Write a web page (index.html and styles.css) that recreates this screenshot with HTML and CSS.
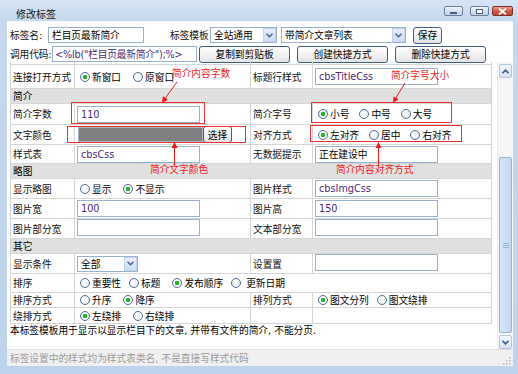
FILE: index.html
```html
<!DOCTYPE html>
<html>
<head>
<meta charset="utf-8">
<title>修改标签</title>
<link rel="stylesheet" href="styles.css">
</head>
<body>
<div class="window">
  <div class="titlebar">
    <span class="title">修改标签</span>
    <div class="controls">
      <span class="ctl min"><i></i></span>
      <span class="ctl max"><i></i></span>
      <span class="ctl close"><svg width="9" height="7" viewBox="0 0 9 7"><path d="M1 0.5 L8 6.5 M8 0.5 L1 6.5" stroke="#fff" stroke-width="1.8"/></svg></span>
    </div>
  </div>
  <div class="client">
    <div class="form">
      <div class="frow">
        <span class="flabel l38">标签名:</span>
        <span class="input w96">栏目页最新简介</span>
        <span class="flabel l40 ml26">标签模板</span>
        <span class="select w67">全站通用<b class="dd"><svg width="7" height="5" viewBox="0 0 7 5"><path d="M0.5 0.8 L3.5 3.8 L6.5 0.8" fill="none" stroke="#4d6185" stroke-width="1.5"/></svg></b></span>
        <span class="select w125 ml4">带简介文章列表<b class="dd"><svg width="7" height="5" viewBox="0 0 7 5"><path d="M0.5 0.8 L3.5 3.8 L6.5 0.8" fill="none" stroke="#4d6185" stroke-width="1.5"/></svg></b></span>
        <span class="btn w29 ml7">保存</span>
      </div>
      <div class="frow">
        <span class="flabel l42">调用代码:</span>
        <span class="input w145 code tight">&lt;%lb("栏目页最新简介");%&gt;</span>
        <span class="btn w91 ml2">复制到剪贴板</span>
        <span class="btn w91 ml7">创建快捷方式</span>
        <span class="btn w91 ml7">删除快捷方式</span>
      </div>
    </div>
    <div class="scrollarea">
      <div class="scrollcontent">
        <table class="grid">
          <colgroup><col class="c1"><col class="c2"><col class="c3"><col class="c4"></colgroup>
          <tr class="h20 cut">
            <td class="lbl"></td>
            <td><span class="radios g12"><span class="radio"><i class="rb on"></i><i class="sp2"></i></span><span class="radio"><i class="rb"></i><i class="sp3"></i></span></span></td>
            <td class="lbl"></td>
            <td><span class="radios g10"><span class="radio"><i class="rb on"></i><i class="sp3"></i></span><span class="radio"><i class="rb"></i><i class="sp2"></i></span><span class="radio"><i class="rb"></i><i class="sp3"></i></span></span></td>
          </tr>
          <tr class="h24">
            <td class="lbl">连接打开方式</td>
            <td><span class="radios g12"><span class="radio"><i class="rb on"></i>新窗口</span><span class="radio"><i class="rb"></i>原窗口</span></span></td>
            <td class="lbl">标题行样式</td>
            <td><span class="input w123 code">cbsTitleCss</span></td>
          </tr>
          <tr class="sec h14"><td colspan="4">简介</td></tr>
          <tr class="h21">
            <td class="lbl">简介字数</td>
            <td><span class="input w123 code">110</span></td>
            <td class="lbl">简介字号</td>
            <td><span class="radios g10"><span class="radio"><i class="rb on"></i>小号</span><span class="radio"><i class="rb"></i>中号</span><span class="radio"><i class="rb"></i>大号</span></span></td>
          </tr>
          <tr class="h20">
            <td class="lbl">文字颜色</td>
            <td><span class="colorpick"><span class="swatch"></span><span class="btn pick">选择</span></span></td>
            <td class="lbl">对齐方式</td>
            <td><span class="radios g10"><span class="radio"><i class="rb on"></i>左对齐</span><span class="radio"><i class="rb"></i>居中</span><span class="radio"><i class="rb"></i>右对齐</span></span></td>
          </tr>
          <tr class="h19">
            <td class="lbl">样式表</td>
            <td><span class="input w123 code">cbsCss</span></td>
            <td class="lbl">无数据提示</td>
            <td><span class="input w123">正在建设中</span></td>
          </tr>
          <tr class="sec h15"><td colspan="4">略图</td></tr>
          <tr class="h20">
            <td class="lbl">显示略图</td>
            <td><span class="radios g12"><span class="radio"><i class="rb"></i>显示</span><span class="radio"><i class="rb on"></i>不显示</span></span></td>
            <td class="lbl">图片样式</td>
            <td><span class="input w123 code">cbsImgCss</span></td>
          </tr>
          <tr class="h20">
            <td class="lbl">图片宽</td>
            <td><span class="input w123 code">100</span></td>
            <td class="lbl">图片高</td>
            <td><span class="input w123 code">150</span></td>
          </tr>
          <tr class="h19">
            <td class="lbl">图片部分宽</td>
            <td><span class="input w123"></span></td>
            <td class="lbl">文本部分宽</td>
            <td><span class="input w123"></span></td>
          </tr>
          <tr class="sec h15"><td colspan="4">其它</td></tr>
          <tr class="h20">
            <td class="lbl">显示条件</td>
            <td><span class="select w61">全部<b class="dd"><svg width="7" height="5" viewBox="0 0 7 5"><path d="M0.5 0.8 L3.5 3.8 L6.5 0.8" fill="none" stroke="#4d6185" stroke-width="1.5"/></svg></b></span></td>
            <td class="lbl">设置置</td>
            <td><span class="input w123"></span></td>
          </tr>
          <tr class="h19">
            <td class="lbl">排序</td>
            <td colspan="3"><span class="radios g8"><span class="radio"><i class="rb"></i>重要性</span><span class="radio extra"><i class="rb"></i>标题</span><span class="radio"><i class="rb on"></i>发布顺序</span><span class="radio wide"><i class="rb"></i>更新日期</span></span></td>
          </tr>
          <tr class="h14">
            <td class="lbl">排序方式</td>
            <td><span class="radios g12"><span class="radio"><i class="rb"></i>升序</span><span class="radio"><i class="rb on"></i>降序</span></span></td>
            <td class="lbl">排列方式</td>
            <td><span class="radios g8"><span class="radio"><i class="rb on"></i>图文分列</span><span class="radio"><i class="rb"></i>图文绕排</span></span></td>
          </tr>
          <tr class="h16">
            <td class="lbl">绕排方式</td>
            <td><span class="radios g12"><span class="radio"><i class="rb on"></i>左绕排</span><span class="radio"><i class="rb"></i>右绕排</span></span></td>
            <td></td>
            <td></td>
          </tr>
        </table>
        <p class="desc">本标签模板用于显示以显示栏目下的文章, 并带有文件的简介, 不能分页.</p>
      </div>
      <div class="scrollbar">
        <span class="sbtn"><svg width="7" height="5" viewBox="0 0 7 5"><path d="M0.5 4.2 L3.5 1.2 L6.5 4.2" fill="none" stroke="#3d5a8a" stroke-width="1.6"/></svg></span>
        <div class="track"><span class="thumb"><i></i><i></i><i></i></span></div>
        <span class="sbtn"><svg width="7" height="5" viewBox="0 0 7 5"><path d="M0.5 0.8 L3.5 3.8 L6.5 0.8" fill="none" stroke="#3d5a8a" stroke-width="1.6"/></svg></span>
      </div>
    </div>
    <div class="status">
      <span>标签设置中的样式均为样式表类名, 不是直接写样式代码</span>
      <svg class="grip" width="9" height="9" viewBox="0 0 9 9"><g fill="#b8b8b8"><rect x="7" y="1" width="1.5" height="1.5"/><rect x="4" y="4" width="1.5" height="1.5"/><rect x="7" y="4" width="1.5" height="1.5"/><rect x="1" y="7" width="1.5" height="1.5"/><rect x="4" y="7" width="1.5" height="1.5"/><rect x="7" y="7" width="1.5" height="1.5"/></g></svg>
    </div>
  </div>

  <span class="mark m1"></span>
  <span class="mark m2"></span>
  <span class="mark m3"></span>
  <span class="mark m4"></span>
  <span class="note n1">简介内容字数</span>
  <span class="note n2">简介字号大小</span>
  <span class="note n3">简介文字颜色</span>
  <span class="note n4">简介内容对齐方式</span>
  <svg class="arrows" width="518" height="374" viewBox="0 0 518 374">
    <g stroke="#f01818" stroke-width="1" fill="#f01818">
      <line x1="177" y1="82" x2="165" y2="98.5"/>
      <polygon points="162,103 167.9,99.7 162.9,96.3" stroke="none"/>
      <line x1="405" y1="83" x2="395.5" y2="98.5"/>
      <polygon points="393,103 398.4,99.2 393.6,96.4" stroke="none"/>
      <line x1="174.5" y1="165" x2="174.5" y2="147"/>
      <polygon points="174.5,142 171.5,148 177.5,148" stroke="none"/>
      <line x1="378.5" y1="166" x2="378.5" y2="147"/>
      <polygon points="378.5,142 375.5,148 381.5,148" stroke="none"/>
    </g>
  </svg>
</div>
</body>
</html>
```

FILE: styles.css
```css
* { box-sizing: border-box; }
html, body { margin: 0; padding: 0; }
body {
  width: 518px;
  height: 374px;
  overflow: hidden;
  font-family: "DejaVu Sans", "Noto Sans CJK SC", sans-serif;
  font-size: 9.7px;
  color: #000;
  background: #c4d7ee;
}
.window {
  position: relative;
  width: 518px;
  height: 374px;
  display: flex;
  flex-direction: column;
  padding: 0 5px 8px 7px;
  background: linear-gradient(#d7e4f4, #c6d8ee 21px, #bed2eb);
}
.titlebar {
  height: 21px;
  display: flex;
  align-items: center;
  justify-content: space-between;
  flex: none;
}
.title { padding-left: 9px; padding-top: 5px; font-size: 10px; color: #1a1a1a; }
.controls { display: flex; gap: 7px; padding-top: 1px; }
.ctl {
  width: 19px; height: 10px;
  border: 1px solid #6a7f9e;
  border-radius: 2px;
  background: linear-gradient(#f3f6fb, #d6e1ef 50%, #c3d3e8);
  display: flex; align-items: center; justify-content: center;
}
.ctl.min i { width: 7px; height: 2px; background: #fff; border: 1px solid #4a5d7a; margin-top: 4px; }
.ctl.max i { width: 7px; height: 5px; border: 1px solid #4a5d7a; background: #fff; }
.ctl.close {
  width: 21px; margin-left: -4px;
  border-color: #7a2f27;
  background: linear-gradient(#e9a293, #d05a48 50%, #c14535);
}
.client {
  flex: 1;
  background: #fff;
  display: flex;
  flex-direction: column;
  min-height: 0;
}
.form { padding: 6px 0 0 3px; display: flex; flex-direction: column; gap: 3px; flex: none; }
.frow { display: flex; align-items: center; height: 16px; }
.flabel { flex: none; color: #111; white-space: nowrap; }
.l38 { width: 38px; }
.l40 { width: 40px; }
.l42 { width: auto; letter-spacing: -0.1px; margin-right: 0.5px; }
.ml2 { margin-left: 2px; }
.ml4 { margin-left: 4px; }
.ml7 { margin-left: 7px; }
.ml26 { margin-left: 26px; }
.input {
  display: inline-flex; align-items: center;
  height: 16px;
  border: 1px solid #98b2cf;
  background: #fff;
  padding: 0 3px;
  white-space: nowrap;
  overflow: hidden;
  flex: none;
}
.code { color: #4b2a7a; }
.tight { padding: 0 0 0 2px; letter-spacing: -0.2px; }
.w96 { width: 96px; }
.w145 { width: 145px; }
.w123 { width: 123px; height: 17px; }
.w67 { width: 67px; }
.w125 { width: 125px; }
.w61 { width: 61px; height: 15px; }
.w29 { width: 29px; }
.w91 { width: 91px; }
.select {
  display: inline-flex; align-items: center; justify-content: space-between;
  height: 16px;
  border: 1px solid #98b2cf;
  padding: 0 0 0 3px;
  background: #fff;
  flex: none;
  white-space: nowrap;
}
.dd {
  width: 13px; height: 14px;
  background: linear-gradient(#e8eef9, #cfdcf2);
  border: 1px solid #c3d1ea;
  display: flex; align-items: center; justify-content: center;
}
.btn {
  display: inline-flex; align-items: center; justify-content: center;
  height: 17px;
  border: 1px solid #3f5f83;
  border-radius: 3px;
  background: linear-gradient(#ffffff, #f2f2f2 50%, #e2e2e2);
  flex: none;
  white-space: nowrap;
}
.scrollarea { flex: 1; display: flex; min-height: 0; }
.scrollcontent { flex: 1; overflow: hidden; padding-left: 3px; }
.grid {
  border-collapse: collapse;
  table-layout: fixed;
  width: 481px;
  margin-top: -18px;
}
.c1 { width: 64px; }
.c2 { width: 176px; }
.c3 { width: 62px; }
.c4 { width: 179px; }
.grid td {
  border: 1px solid #d6d6d6;
  padding: 0 0 0 2px;
  vertical-align: middle;
  white-space: nowrap;
  overflow: hidden;
}
.grid td.lbl { padding-left: 2px; color: #111; }
.grid tr.sec td { background: #e0e0e0; padding-left: 2px; }
.grid tr.cut td { vertical-align: bottom; padding-bottom: 4px; }
.sp2 { width: 19px; height: 2px; }
.sp3 { width: 29px; height: 2px; }
.h14 td { height: 14px; }
.h15 td { height: 15px; }
.h16 td { height: 16px; }
.h19 td { height: 19px; }
.h20 td { height: 20px; }
.h21 td { height: 21px; }
.h24 td { height: 24px; }
.radios { display: flex; align-items: center; padding-left: 3px; }
.g8 { gap: 8px; }
.g10 { gap: 10px; }
.g12 { gap: 12px; }
.radio { display: inline-flex; align-items: center; gap: 2px; }
.radio.wide { gap: 5px; }
.radio.extra { margin-right: 4px; }
.rb {
  width: 10px; height: 10px;
  border-radius: 50%;
  border: 1px solid #4f6f94;
  background: radial-gradient(circle at 40% 40%, #ffffff, #e4e9ef);
  flex: none;
}
.rb.on { background: radial-gradient(circle, #29b22f 0, #29b22f 2px, #ffffff 2.6px, #e6ebf0); }
.colorpick { display: flex; align-items: center; padding-left: 1px; }
.swatch { width: 125px; height: 15px; background: #808080; border: 1px solid #a8b6c6; }
.btn.pick { width: 29px; height: 17px; }
.desc { margin: 1px 0 0; line-height: 12px; }
.scrollbar {
  width: 16px;
  flex: none;
  display: flex;
  flex-direction: column;
  background: #f6f6f6;
  border-left: 1px solid #ececec;
  padding: 2px 1px 0;
}
.sbtn {
  height: 14px;
  border: 1px solid #b7c6da;
  border-radius: 2px;
  background: linear-gradient(#f2f6fb, #d8e3f1);
  display: flex; align-items: center; justify-content: center;
  flex: none;
}
.track { flex: 1; display: flex; flex-direction: column; justify-content: flex-end; padding: 2px 0; }
.thumb {
  height: 176px;
  border: 1px solid #9ab3d5;
  border-radius: 2px;
  background: linear-gradient(90deg, #d9e6f7, #c3d6ef);
  display: flex; flex-direction: column; align-items: center; justify-content: center; gap: 1px;
}
.thumb i { width: 6px; height: 1px; background: #9fb5d2; }
.status {
  height: 17px;
  flex: none;
  background: #f0f0f0;
  border-top: 1px solid #dedede;
  color: #9c9c9c;
  padding-left: 3px;
  display: flex;
  align-items: center;
  justify-content: space-between;
}
.grip { align-self: flex-end; margin-right: 2px; margin-bottom: 1px; }
.mark { position: absolute; border: 1px solid #f03030; }
.m1 { left: 71px; top: 102px; width: 134px; height: 22px; }
.m2 { left: 67px; top: 126px; width: 179px; height: 17px; }
.m3 { left: 311px; top: 102px; width: 141px; height: 21px; }
.m4 { left: 310px; top: 125px; width: 152px; height: 17px; }
.note { position: absolute; color: #f01818; line-height: 12px; }
.n1 { left: 172px; top: 68px; }
.n2 { left: 391px; top: 70px; }
.n3 { left: 150px; top: 164px; }
.n4 { left: 336px; top: 164px; }
.arrows { position: absolute; left: 0; top: 0; pointer-events: none; }
```
